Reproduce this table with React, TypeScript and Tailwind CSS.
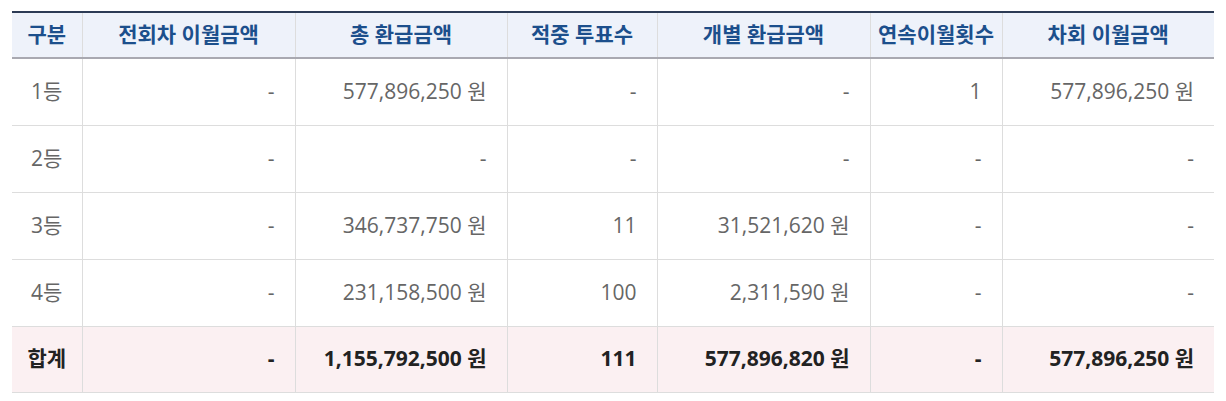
import React from "react";

const headers = ["구분", "전회차 이월금액", "총 환급금액", "적중 투표수", "개별 환급금액", "연속이월횟수", "차회 이월금액"];
const widths = ["w-[70px]", "w-[213px]", "w-[212px]", "w-[150px]", "w-[213px]", "w-[132px]", "w-[212px]"];

const rows = [
  ["1등", "-", "577,896,250 원", "-", "-", "1", "577,896,250 원"],
  ["2등", "-", "-", "-", "-", "-", "-"],
  ["3등", "-", "346,737,750 원", "11", "31,521,620 원", "-", "-"],
  ["4등", "-", "231,158,500 원", "100", "2,311,590 원", "-", "-"],
];
const total = ["합계", "-", "1,155,792,500 원", "111", "577,896,820 원", "-", "577,896,250 원"];

export default function App() {
  return (
    <div className="bg-white w-[1226px] h-[401px] pt-[11px] px-[12px]" style={{ fontFamily: '"Open Sans", "Noto Sans CJK KR", sans-serif' }}>
      <table className="border-collapse table-fixed w-[1202px] text-[21px]">
        <colgroup>
          {widths.map((w, i) => (
            <col key={i} className={w} />
          ))}
        </colgroup>
        <thead>
          <tr className="bg-[#eef2fa] border-t-2 border-t-[#2c3b55] border-b-2 border-b-[#a9a9b1]">
            {headers.map((h, i) => (
              <th key={i} className={`h-[46px] font-bold text-[#1c4f8c] text-center ${i > 0 ? "border-l border-l-[#dddddd]" : ""}`}>
                {h}
              </th>
            ))}
          </tr>
        </thead>
        <tbody>
          {rows.map((r, ri) => (
            <tr key={ri} className="border-b border-b-[#dddddd]">
              {r.map((c, i) => (
                <td key={i} className={`h-[67px] text-[#666666] ${i === 0 ? "text-center" : "text-right pr-[20px] border-l border-l-[#dddddd]"}`}>
                  {c}
                </td>
              ))}
            </tr>
          ))}
          <tr className="bg-[#fbf0f2] border-b border-b-[#dddddd]">
            {total.map((c, i) => (
              <td key={i} className={`h-[66px] font-bold text-[#222222] ${i === 0 ? "text-center" : "text-right pr-[20px] border-l border-l-[#dddddd]"}`}>
                {c}
              </td>
            ))}
          </tr>
        </tbody>
      </table>
    </div>
  );
}
